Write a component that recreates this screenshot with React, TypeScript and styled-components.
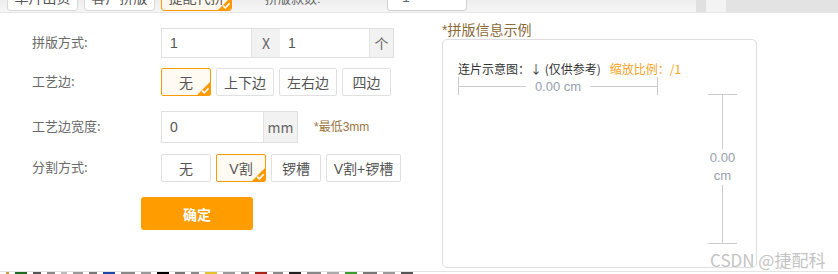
import React from 'react';
import styled, { createGlobalStyle } from 'styled-components';

const GlobalStyle = createGlobalStyle`
  html, body {
    margin: 0;
    padding: 0;
    background: #fff;
  }
  body {
    font-family: 'Liberation Sans', 'Noto Sans CJK SC', sans-serif;
  }
`;

const Page = styled.div`
  position: relative;
  width: 838px;
  height: 274px;
  overflow: hidden;
  background: #fff;
  display: flex;
  flex-direction: column;
`;

/* strip of the dialog that has been scrolled off the top */
const TopStrip = styled.div`
  height: 12px;
  flex: none;
  overflow: hidden;
  display: flex;
  background: linear-gradient(#eeeeee, #f6f6f6);
  border-bottom: 1px solid #e6e6e6;
`;

const TopRow = styled.div`
  width: 696px;
  flex: none;
  display: flex;
  align-items: center;
  gap: 6px;
  padding-left: 7px;
  box-sizing: border-box;
  margin-top: -17px;
  height: 28px;
`;

const TopScroll = styled.div<{ shade: string; w: number }>`
  width: ${(p) => p.w}px;
  flex: none;
  background: ${(p) => p.shade};
`;

const TopButton = styled.div<{ active?: boolean }>`
  position: relative;
  width: 71px;
  height: 27px;
  flex: none;
  box-sizing: border-box;
  border: 1px solid ${(p) => (p.active ? '#f90' : '#d9d9d9')};
  border-radius: 3px;
  background: ${(p) => (p.active ? '#fff8ee' : '#fff')};
  color: #555;
  font-size: 14px;
  display: flex;
  align-items: center;
  justify-content: center;
  overflow: hidden;
`;

const TopLabel = styled.span`
  margin-left: 27px;
  width: 116px;
  flex: none;
  font-size: 13px;
  color: #666;
`;

const TopInput = styled.div`
  width: 80px;
  height: 27px;
  flex: none;
  box-sizing: border-box;
  border: 1px solid #cfcfcf;
  border-radius: 3px;
  background: #fff;
  color: #666;
  font-size: 14px;
  padding-left: 14px;
  display: flex;
  align-items: center;
`;

const Body = styled.div`
  flex: 1;
  display: flex;
`;

const Form = styled.div`
  width: 410px;
  padding: 15px 0 0 32px;
  box-sizing: border-box;
  display: flex;
  flex-direction: column;
`;

const Row = styled.div<{ top: number }>`
  display: flex;
  align-items: center;
  margin-top: ${(p) => p.top}px;
`;

const Label = styled.div`
  width: 129px;
  flex: none;
  font-size: 13px;
  color: #6a6a6a;
  font-family: 'Noto Sans CJK SC', sans-serif;
  margin-top: -3px;
`;

const InputGroup = styled.div<{ h: number }>`
  display: flex;
  height: ${(p) => p.h}px;
  box-sizing: border-box;
  border: 1px solid #e0e0e0;
`;

const Field = styled.div<{ w: number }>`
  width: ${(p) => p.w}px;
  box-sizing: border-box;
  padding-left: 8px;
  display: flex;
  align-items: center;
  font-size: 14px;
  color: #555;
  background: #fff;
`;

const Addon = styled.div<{ w: number }>`
  width: ${(p) => p.w}px;
  background: #f2f2f2;
  border-left: 1px solid #e3e3e3;
  display: flex;
  align-items: center;
  justify-content: center;
  font-size: 14px;
  color: #666;
  font-family: 'Noto Sans CJK SC', sans-serif;
`;

const Options = styled.div`
  display: flex;
  gap: 5px;
`;

const Option = styled.div<{ w: number; h: number; active?: boolean }>`
  position: relative;
  width: ${(p) => p.w}px;
  height: ${(p) => p.h}px;
  box-sizing: border-box;
  border: 1px solid ${(p) => (p.active ? '#f90' : '#e0e0e0')};
  border-radius: 2px;
  background: ${(p) => (p.active ? '#fffaf2' : '#fff')};
  color: #555;
  font-size: 14px;
  font-family: 'Liberation Sans', 'Noto Sans CJK SC', sans-serif;
  display: flex;
  align-items: center;
  justify-content: center;
  overflow: hidden;
`;

const Corner = styled.span`
  position: absolute;
  right: 0;
  bottom: 0;
  width: 0;
  height: 0;
  border-style: solid;
  border-width: 0 0 13px 13px;
  border-color: transparent transparent #f90 transparent;
`;

const CornerCheck = styled.svg`
  position: absolute;
  right: 0;
  bottom: 0;
`;

const Hint = styled.span`
  margin-left: 16px;
  margin-top: -3px;
  font-size: 12px;
  color: #9a7440;
  font-family: 'Liberation Sans', 'Noto Sans CJK SC', sans-serif;
`;

const Submit = styled.button`
  margin: 15px 0 0 109px;
  width: 112px;
  height: 33px;
  border: none;
  border-radius: 3px;
  background: #ff9c00;
  color: #fff;
  font-size: 14px;
  font-weight: bold;
  font-family: 'Noto Sans CJK SC', sans-serif;
  cursor: pointer;
`;

const Preview = styled.div`
  padding: 8px 0 0 32px;
  display: flex;
  flex-direction: column;
`;

const PreviewTitle = styled.div`
  font-size: 14px;
  line-height: 18px;
  color: #8b6a3a;
  font-family: 'Liberation Sans', 'Noto Sans CJK SC', sans-serif;
`;

const PreviewBox = styled.div`
  width: 315px;
  height: 229px;
  box-sizing: border-box;
  border: 1px solid #ddd;
  border-radius: 5px;
  padding: 20px 0 0 15px;
  display: flex;
  flex-direction: column;
`;

const Caption = styled.div`
  font-size: 12px;
  color: #333;
  font-family: 'Noto Sans CJK SC', sans-serif;
  line-height: 17px;
`;

const Scale = styled.span`
  margin-left: 9px;
  color: #f7a21b;
`;

const Diagram = styled.div`
  display: flex;
  align-items: flex-start;
`;

const HRuler = styled.div`
  width: 200px;
  height: 18px;
  box-sizing: border-box;
  border-left: 1px solid #ccc;
  border-right: 1px solid #ccc;
  display: flex;
  align-items: center;
  gap: 9px;
`;

const RuleLine = styled.span`
  flex: 1;
  height: 1px;
  background: #ccc;
`;

const RuleText = styled.span`
  font-size: 13px;
  color: #98a0ae;
`;

const VRuler = styled.div`
  margin: 17px 0 0 50px;
  width: 29px;
  height: 150px;
  box-sizing: border-box;
  border-top: 1px solid #ccc;
  border-bottom: 1px solid #ccc;
  display: flex;
  flex-direction: column;
  align-items: center;
`;

const VLine = styled.span<{ h: number }>`
  width: 1px;
  height: ${(p) => p.h}px;
  background: #ccc;
`;

const VText = styled.span`
  font-size: 13px;
  line-height: 18px;
  color: #98a0ae;
  text-align: center;
`;

const BottomStrip = styled.div`
  position: absolute;
  left: 0;
  right: 0;
  bottom: 0;
  height: 2px;
  border-top: 1px solid #e3e3e3;
  display: flex;
  gap: 6px;
  padding-left: 6px;
`;

const Tile = styled.span<{ c: string; w: number }>`
  width: ${(p) => p.w}px;
  background: ${(p) => p.c};
`;

const Watermark = styled.div`
  position: absolute;
  left: 710px;
  top: 247px;
  font-size: 17px;
  color: #c4c4c4;
  font-family: 'Noto Sans CJK SC', sans-serif;
  text-shadow: 0 0 2px #fff;
`;

const Check = () => (
  <>
    <Corner />
    <CornerCheck width="13" height="13" viewBox="0 0 13 13">
      <path d="M5 8.6 L7.3 10.8 L11.6 6.4" fill="none" stroke="#fff" strokeWidth="1.6" />
    </CornerCheck>
  </>
);

const edges = [
  { text: '无', w: 50 },
  { text: '上下边', w: 58 },
  { text: '左右边', w: 58 },
  { text: '四边', w: 49 },
];

const cuts = [
  { text: '无', w: 50 },
  { text: 'V割', w: 50 },
  { text: '锣槽', w: 50 },
  { text: 'V割+锣槽', w: 75 },
];

const tiles = [
  ['#c79b42', 3], ['#1d6b22', 12], ['#555', 8], ['#888', 8], ['#bbb', 6], ['#999', 10],
  ['#777', 8], ['#1f47a8', 12], ['#888', 14], ['#999', 10], ['#000', 12], ['#777', 10],
  ['#888', 8], ['#e5c22c', 12], ['#999', 12], ['#888', 8], ['#a82418', 12], ['#888', 10],
  ['#222', 12], ['#888', 14], ['#aaa', 12], ['#3b9b30', 12], ['#777', 14], ['#999', 12],
  ['#555', 12],
] as const;

export default function App() {
  const edgeSel = 0;
  const cutSel = 1;
  return (
    <Page>
      <GlobalStyle />
      <TopStrip>
        <TopRow>
          <TopButton>单片出货</TopButton>
          <TopButton>客户拼版</TopButton>
          <TopButton active>
            捷配代拼
            <Check />
          </TopButton>
          <TopLabel>拼版款数:</TopLabel>
          <TopInput>1</TopInput>
        </TopRow>
        <TopScroll shade="#e0e0e0" w={10} />
        <TopScroll shade="#f3f3f3" w={20} />
        <TopScroll shade="#e3e3e3" w={112} />
      </TopStrip>
      <Body>
        <Form>
          <Row top={0}>
            <Label>拼版方式:</Label>
            <InputGroup h={30}>
              <Field w={89}>1</Field>
              <Addon w={28}>X</Addon>
              <Field w={89}>1</Field>
              <Addon w={23}>个</Addon>
            </InputGroup>
          </Row>
          <Row top={10}>
            <Label>工艺边:</Label>
            <Options>
              {edges.map((o, i) => (
                <Option key={o.text} w={o.w} h={28} active={i === edgeSel}>
                  {o.text}
                  {i === edgeSel && <Check />}
                </Option>
              ))}
            </Options>
          </Row>
          <Row top={15}>
            <Label>工艺边宽度:</Label>
            <InputGroup h={32}>
              <Field w={101}>0</Field>
              <Addon w={33}>mm</Addon>
            </InputGroup>
            <Hint>*最低3mm</Hint>
          </Row>
          <Row top={11}>
            <Label>分割方式:</Label>
            <Options>
              {cuts.map((o, i) => (
                <Option key={o.text} w={o.w} h={28} active={i === cutSel}>
                  {o.text}
                  {i === cutSel && <Check />}
                </Option>
              ))}
            </Options>
          </Row>
          <Submit>确定</Submit>
        </Form>
        <Preview>
          <PreviewTitle>*拼版信息示例</PreviewTitle>
          <PreviewBox>
            <Caption>
              连片示意图：↓ (仅供参考)<Scale>缩放比例：/1</Scale>
            </Caption>
            <Diagram>
              <HRuler>
                <RuleLine />
                <RuleText>0.00 cm</RuleText>
                <RuleLine />
              </HRuler>
              <VRuler>
                <VLine h={54} />
                <VText>
                  0.00
                  <br />
                  cm
                </VText>
                <VLine h={58} />
              </VRuler>
            </Diagram>
          </PreviewBox>
        </Preview>
      </Body>
      <BottomStrip>
        {tiles.map(([c, w], i) => (
          <Tile key={i} c={c} w={w} />
        ))}
      </BottomStrip>
      <Watermark>CSDN @捷配科技</Watermark>
    </Page>
  );
}
